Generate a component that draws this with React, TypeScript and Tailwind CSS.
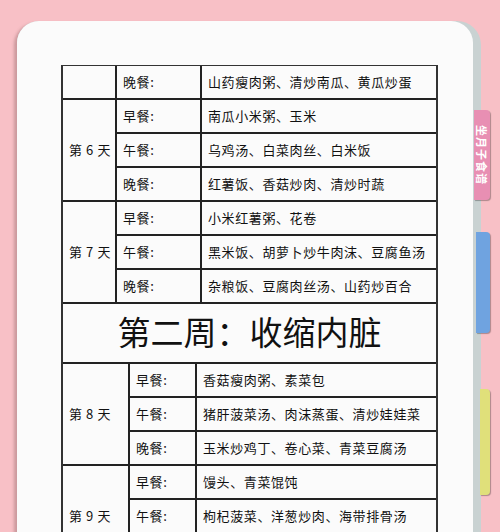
import React from "react";

const week1 = [
  { day: "", rows: [["晚餐:", "山药瘦肉粥、清炒南瓜、黄瓜炒蛋"]] },
  {
    day: "第 6 天",
    rows: [
      ["早餐:", "南瓜小米粥、玉米"],
      ["午餐:", "乌鸡汤、白菜肉丝、白米饭"],
      ["晚餐:", "红薯饭、香菇炒肉、清炒时蔬"],
    ],
  },
  {
    day: "第 7 天",
    rows: [
      ["早餐:", "小米红薯粥、花卷"],
      ["午餐:", "黑米饭、胡萝卜炒牛肉沫、豆腐鱼汤"],
      ["晚餐:", "杂粮饭、豆腐肉丝汤、山药炒百合"],
    ],
  },
];

const week2 = [
  {
    day: "第 8 天",
    rows: [
      ["早餐:", "香菇瘦肉粥、素菜包"],
      ["午餐:", "猪肝菠菜汤、肉沫蒸蛋、清炒娃娃菜"],
      ["晚餐:", "玉米炒鸡丁、卷心菜、青菜豆腐汤"],
    ],
  },
  {
    day: "第 9 天",
    rows: [
      ["早餐:", "馒头、青菜馄饨"],
      ["午餐:", "枸杞菠菜、洋葱炒肉、海带排骨汤"],
      ["晚餐:", "小米粥、清蒸鱼、凉拌黄瓜"],
    ],
  },
];

function DayBlock({ day, rows, c1, c2, first }: { day: string; rows: string[][]; c1: string; c2: string; first?: boolean }) {
  return (
    <div className={`flex ${first ? "" : "border-t-2 border-[#222]"}`}>
      <div className={`${c1} flex items-center pl-[6px] border-r-2 border-[#222]`}>{day}</div>
      <div className="flex flex-1 flex-col">
        {rows.map((r, i) => (
          <div key={i} className={`flex ${i > 0 ? "h-[34px] border-t-2 border-[#222]" : "h-[32px]"}`}>
            <div className={`${c2} flex items-center pl-[6px] border-r-2 border-[#222]`}>{r[0]}</div>
            <div className="flex flex-1 items-center pl-[6px]">{r[1]}</div>
          </div>
        ))}
      </div>
    </div>
  );
}

export default function App() {
  return (
    <div className="relative h-[532px] w-[500px] overflow-hidden bg-[#f8c0c6] pl-[17px] pt-[21px] font-['Noto_Sans_CJK_SC',sans-serif]">
      <div className="flex h-[560px] w-[464px] rounded-tl-[22px] rounded-tr-[24px] bg-[#c9d2d2] shadow-[-3px_2px_3px_rgba(120,80,80,0.35)]">
        <div className="h-full w-[456px] rounded-tl-[22px] rounded-tr-[22px] bg-[#fbfbfb] pl-[44px] pt-[44px]">
          <div className="w-[377px] border-x-2 border-t border-[#333] bg-[#fbfbfb] text-[13px] tracking-[0.6px] text-[#111]">
            {week1.map((d, i) => (
              <DayBlock key={i} first={i === 0} day={d.day} rows={d.rows} c1="w-[54px]" c2="w-[85px]" />
            ))}
            <div className="flex h-[60px] items-center justify-center border-t-2 border-[#222] pb-[2px] text-[33px] tracking-normal text-[#111]">
              第二周：收缩内脏
            </div>
            {week2.map((d, i) => (
              <DayBlock key={i} day={d.day} rows={d.rows} c1="w-[67px]" c2="w-[67px]" />
            ))}
          </div>
        </div>
      </div>
      <div className="absolute left-[474px] top-[110px] flex h-[90px] w-[16px] items-center justify-center rounded-r-[4px] bg-[#e88fb3] shadow-[1px_1px_1px_rgba(0,0,0,0.3)]">
        <span className="text-[11px] font-bold leading-[12px] tracking-[1px] text-white [writing-mode:vertical-rl] [text-orientation:sideways]">坐月子食谱</span>
      </div>
      <div className="absolute left-[476px] top-[232px] h-[101px] w-[14px] rounded-r-[4px] bg-[#6fa3e0] shadow-[1px_1px_1px_rgba(0,0,0,0.3)]" />
      <div className="absolute left-[480px] top-[389px] h-[106px] w-[10px] rounded-r-[4px] bg-[#e0e07a] shadow-[1px_1px_1px_rgba(0,0,0,0.3)]" />
    </div>
  );
}
